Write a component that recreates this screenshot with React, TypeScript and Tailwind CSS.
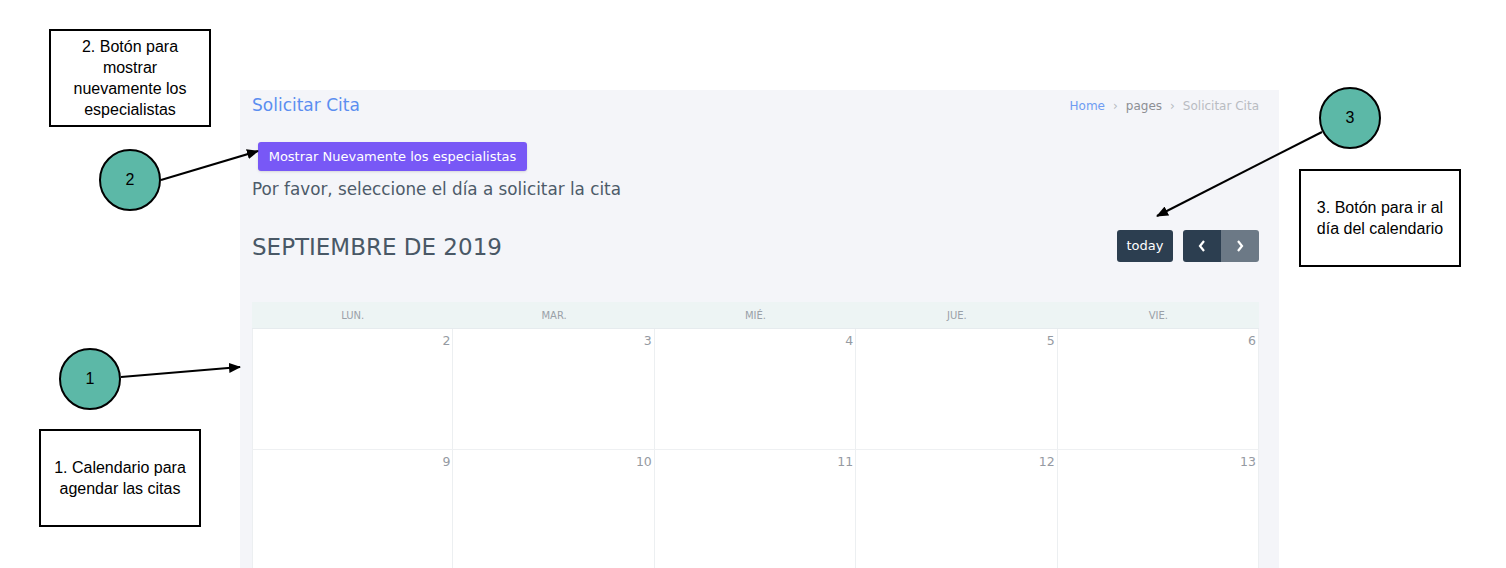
const days = ["LUN.", "MAR.", "MIÉ.", "JUE.", "VIE."];
const weeks = [
  [2, 3, 4, 5, 6],
  [9, 10, 11, 12, 13],
];

const Note = ({ className, children }: { className: string; children: React.ReactNode }) => (
  <div
    className={`absolute flex items-center justify-center border-2 border-black bg-white text-center text-[16px] leading-[21px] text-black ${className}`}
    style={{ fontFamily: '"Liberation Sans", Arial, sans-serif' }}
  >
    {children}
  </div>
);

const Bubble = ({ className, n }: { className: string; n: number }) => (
  <div
    className={`absolute flex h-[62px] w-[62px] items-center justify-center rounded-full border-2 border-black bg-[#5cb8a7] text-[16px] text-black ${className}`}
    style={{ fontFamily: '"Liberation Sans", Arial, sans-serif' }}
  >
    {n}
  </div>
);

const App = () => {
  return (
    <div className="relative h-[568px] w-[1506px] overflow-hidden bg-white font-['DejaVu_Sans',sans-serif]">
      <section className="ml-[240px] mt-[90px] h-[478px] w-[1039px] bg-[#f4f5f9] pl-3 pr-5">
        <div className="flex h-8 items-center justify-between">
          <h1 className="text-[17px] text-[#5b8ef0]">Solicitar Cita</h1>
          <nav className="flex items-center gap-[8px] text-[12px]">
            <span className="text-[#6f9cf2]">Home</span>
            <span className="text-[#b5b9c0]">›</span>
            <span className="text-[#8d8f94]">pages</span>
            <span className="text-[#b5b9c0]">›</span>
            <span className="text-[#b9bcc2]">Solicitar Cita</span>
          </nav>
        </div>

        <button className="ml-[6px] mt-5 h-[29px] w-[269px] rounded-[3px] bg-[#7858f6] text-[13px] text-white shadow-sm">
          Mostrar Nuevamente los especialistas
        </button>

        <p className="mt-[6px] text-[16.8px] leading-6 text-[#4d5b69]">
          Por favor, seleccione el día a solicitar la cita
        </p>

        <div className="mt-[29px] flex h-8 items-center justify-between">
          <h2 className="translate-y-[1px] text-[23px] text-[#495866]">SEPTIEMBRE DE 2019</h2>
          <div className="flex items-center gap-[10px]">
            <button className="h-8 w-[56px] rounded-[3px] bg-[#2c3e50] text-[13px] text-white">today</button>
            <div className="flex overflow-hidden rounded-[3px]">
              <button className="flex h-8 w-[38px] items-center justify-center bg-[#2c3e50] text-white">
                <svg width="10" height="14" viewBox="0 0 10 14" fill="none" stroke="white" strokeWidth="2.2">
                  <path d="M7 2 L3 7 L7 12" />
                </svg>
              </button>
              <button className="flex h-8 w-[38px] items-center justify-center bg-[#6c7986] text-white">
                <svg width="10" height="14" viewBox="0 0 10 14" fill="none" stroke="white" strokeWidth="2.2">
                  <path d="M3 2 L7 7 L3 12" />
                </svg>
              </button>
            </div>
          </div>
        </div>

        <div className="mt-10 w-[1007px]">
          <div className="grid h-[27px] grid-cols-5 items-center border-b border-[#e6ebee] bg-[#edf4f4]">
            {days.map((d) => (
              <div key={d} className="text-center text-[10px] text-[#9aa1a8]">
                {d}
              </div>
            ))}
          </div>
          {weeks.map((w, i) => (
            <div key={i} className="grid h-[121px] grid-cols-5 border-b border-[#eef0f2] bg-white">
              {w.map((n, j) => (
                <div
                  key={n}
                  className={`border-[#eceff1] pr-[2px] pt-[3px] text-right text-[12.5px] text-[#959aa2] ${j === 0 ? "border-l" : ""} border-r`}
                >
                  {n}
                </div>
              ))}
            </div>
          ))}
        </div>
      </section>

      <Note className="left-[49px] top-[29px] h-[98px] w-[162px]">
        <span>
          2. Botón para
          <br />
          mostrar
          <br />
          nuevamente los
          <br />
          especialistas
        </span>
      </Note>
      <Note className="left-[1299px] top-[169px] h-[98px] w-[162px]">
        <span>
          3. Botón para ir al
          <br />
          día del calendario
        </span>
      </Note>
      <Note className="left-[39px] top-[429px] h-[98px] w-[162px]">
        <span>
          1. Calendario para
          <br />
          agendar las citas
        </span>
      </Note>

      <Bubble className="left-[99px] top-[149px]" n={2} />
      <Bubble className="left-[1319px] top-[87px]" n={3} />
      <Bubble className="left-[59px] top-[348px]" n={1} />

      <svg className="pointer-events-none absolute inset-0" width="1506" height="568">
        <defs>
          <marker id="head" markerWidth="12" markerHeight="10" refX="11" refY="5" orient="auto" markerUnits="userSpaceOnUse">
            <path d="M0 0 L12 5 L0 10 Z" fill="black" />
          </marker>
        </defs>
        <line x1="161" y1="180" x2="258" y2="151" stroke="black" strokeWidth="2" markerEnd="url(#head)" />
        <line x1="1322" y1="132" x2="1157" y2="216" stroke="black" strokeWidth="2" markerEnd="url(#head)" />
        <line x1="121" y1="377" x2="240" y2="367" stroke="black" strokeWidth="2" markerEnd="url(#head)" />
      </svg>
    </div>
  );
};

export default App;
